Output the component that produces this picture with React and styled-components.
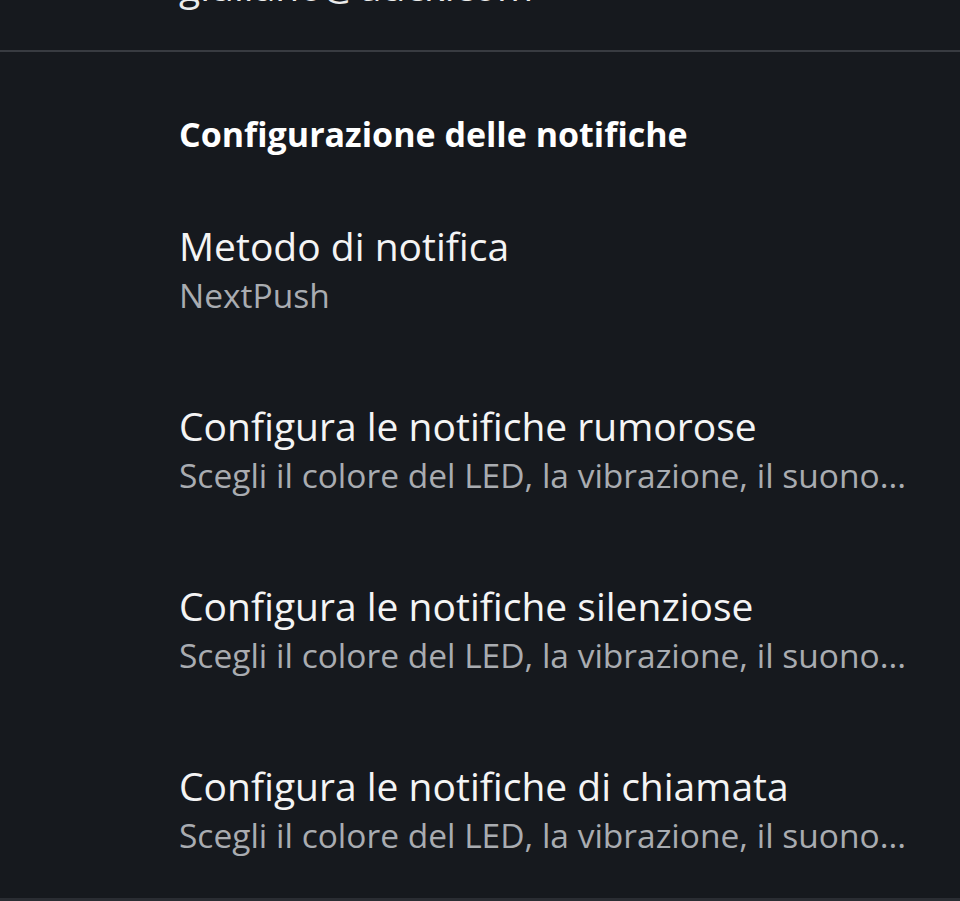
import React from 'react'
import styled, { createGlobalStyle } from 'styled-components'

const GlobalStyle = createGlobalStyle`
  html, body {
    margin: 0;
    padding: 0;
    background: #16191e;
  }
  body {
    font-family: 'Open Sans', 'Noto Sans', sans-serif;
    -webkit-font-smoothing: antialiased;
  }
`

const items = [
  { title: 'Metodo di notifica', summary: 'NextPush' },
  {
    title: 'Configura le notifiche rumorose',
    summary: 'Scegli il colore del LED, la vibrazione, il suono...',
  },
  {
    title: 'Configura le notifiche silenziose',
    summary: 'Scegli il colore del LED, la vibrazione, il suono...',
  },
  {
    title: 'Configura le notifiche di chiamata',
    summary: 'Scegli il colore del LED, la vibrazione, il suono...',
  },
]

export default function App() {
  return (
    <>
      <GlobalStyle />
      <Screen>
        <AccountBlock>
          <Email>giuliano@duck.com</Email>
        </AccountBlock>
        <Section>
          <SectionTitle>Configurazione delle notifiche</SectionTitle>
          {items.map(item => (
            <Preference key={item.title}>
              <PrefTitle>{item.title}</PrefTitle>
              <PrefSummary>{item.summary}</PrefSummary>
            </Preference>
          ))}
        </Section>
        <BottomEdge />
      </Screen>
    </>
  )
}

const Screen = styled.div`
  display: flex;
  flex-direction: column;
  width: 960px;
  height: 901px;
  overflow: hidden;
  background: #16191e;
  color: #f2f2f2;
`

// the list is scrolled, so only the bottom of the e-mail line shows
const AccountBlock = styled.div`
  display: flex;
  align-items: flex-end;
  flex-shrink: 0;
  height: 50px;
  padding-left: 179px;
  border-bottom: 2px solid #383b41;
  overflow: hidden;
`

const Email = styled.div`
  flex-shrink: 0;
  font-size: 39px;
  line-height: 52px;
  margin-bottom: 38px;
  color: #ececec;
`

const Section = styled.div`
  display: flex;
  flex-direction: column;
  flex: 1;
  min-height: 0;
  overflow: hidden;
  padding: 59px 0 0 179px;
`

const SectionTitle = styled.div`
  flex-shrink: 0;
  font-size: 34px;
  font-weight: 700;
  line-height: 46px;
  color: #ffffff;
  margin-bottom: 63px;
`

const Preference = styled.div`
  display: flex;
  flex-direction: column;
  flex-shrink: 0;
  height: 180px;
`

const PrefTitle = styled.div`
  font-size: 39px;
  line-height: 52px;
  color: #f4f4f4;
`

const PrefSummary = styled.div`
  font-size: 33.5px;
  line-height: 46px;
  color: #a9acb1;
`

const BottomEdge = styled.div`
  flex-shrink: 0;
  height: 3px;
  background: #2a2d33;
`
